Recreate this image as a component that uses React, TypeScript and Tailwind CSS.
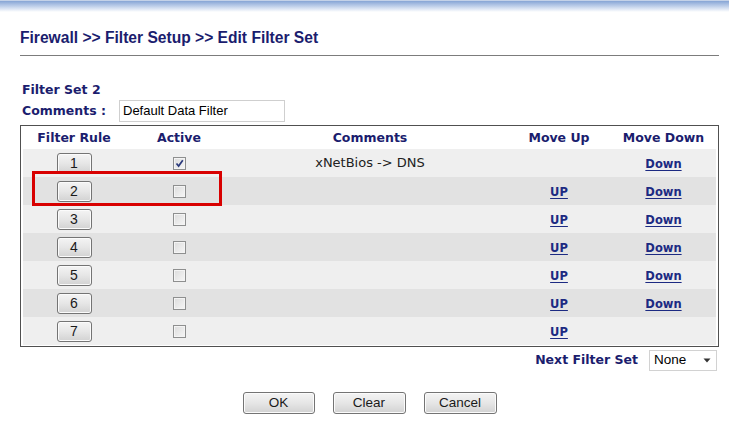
import React from "react";

// Router web UI: Firewall >> Filter Setup >> Edit Filter Set.
// Rows alternate light/dark grey; rule 2 is boxed in red as an annotation.

const NAVY = "text-[#1b1d6e]";

type Rule = { id: number; active: boolean; comment: string; up: boolean; down: boolean };

const rules: Rule[] = [
  { id: 1, active: true, comment: "xNetBios -> DNS", up: false, down: true },
  { id: 2, active: false, comment: "", up: true, down: true },
  { id: 3, active: false, comment: "", up: true, down: true },
  { id: 4, active: false, comment: "", up: true, down: true },
  { id: 5, active: false, comment: "", up: true, down: true },
  { id: 6, active: false, comment: "", up: true, down: true },
  { id: 7, active: false, comment: "", up: true, down: false },
];

const COLS = "grid grid-cols-[102px_108px_274px_104px_105px]";

export default function App() {
  return (
    <div className="h-[446px] w-[729px] overflow-hidden bg-white font-['DejaVu_Sans',sans-serif]">
      {/* Top frame shading */}
      <div className="h-px bg-[#c4d2e8]" />
      <div className="h-[11px] bg-gradient-to-b from-[#87a5d5] to-white" />

      <div className="w-[719px] pl-[20px] pt-[17px]">
        <h1
          className={`h-[18px] font-['Liberation_Sans',Arial,sans-serif] text-[15.6px] font-bold leading-[18px] ${NAVY}`}
        >
          Firewall &gt;&gt; Filter Setup &gt;&gt; Edit Filter Set
        </h1>
        <div className="mt-[8px] h-px bg-[#7c7c7c]" />

        <div className={`mt-[26px] h-[16px] pl-[2px] text-[12.5px] font-bold leading-[16px] ${NAVY}`}>
          Filter Set 2
        </div>
        <div className="mt-[2px] flex h-[22px] items-center pl-[2px]">
          <span className={`w-[97px] text-[12.5px] font-bold ${NAVY}`}>Comments :</span>
          <div className="flex h-[22px] w-[166px] items-center border border-[#cfcfcf] pl-[3px] font-['Liberation_Sans',Arial,sans-serif] text-[13px] text-black">
            Default Data Filter
          </div>
        </div>

        {/* Rule table */}
        <div className="relative mt-[3px] border border-[#505050] px-[2px] pb-[1px] pt-[2px]">
          <div className={`${COLS} h-[21px] items-center text-center text-[12.5px] font-bold ${NAVY}`}>
            <span>Filter Rule</span>
            <span>Active</span>
            <span>Comments</span>
            <span>Move Up</span>
            <span>Move Down</span>
          </div>
          {rules.map((r) => (
            <div
              key={r.id}
              className={`${COLS} h-[28px] items-center text-center ${
                r.id % 2 === 1 ? "bg-[#efefef]" : "bg-[#e2e2e2]"
              }`}
            >
              <div className="flex justify-center">
                <WinButton className="h-[21px] w-[35px] text-[14px]">{r.id}</WinButton>
              </div>
              <div className="flex justify-center">
                <Checkbox checked={r.active} />
              </div>
              <span className="text-[13px] text-[#222]">{r.comment}</span>
              <span>{r.up && <LinkText>UP</LinkText>}</span>
              <span>{r.down && <LinkText>Down</LinkText>}</span>
            </div>
          ))}
          <div className="pointer-events-none absolute left-[11px] top-[45px] h-[35px] w-[190px] border-[3px] border-[#d80000]" />
        </div>

        <div className="mt-[3px] flex h-[21px] items-center justify-end pr-[2px]">
          <span className={`mr-[11px] text-[12.5px] font-bold ${NAVY}`}>Next Filter Set</span>
          <div className="flex h-[21px] w-[68px] items-center justify-between border border-[#d2d2d2] pl-[4px] pr-[5px] font-['Liberation_Sans',Arial,sans-serif] text-[13.5px] text-black">
            <span>None</span>
            <svg width="8" height="5" viewBox="0 0 8 5" aria-hidden="true">
              <path d="M0.5 0.5h7L4 4.5z" fill="#333" />
            </svg>
          </div>
        </div>

        <div className="mt-[21px] flex justify-center gap-[18px]">
          <WinButton className="h-[22px] w-[72px] text-[13.5px]">OK</WinButton>
          <WinButton className="h-[22px] w-[73px] text-[13.5px]">Clear</WinButton>
          <WinButton className="h-[22px] w-[73px] text-[13.5px]">Cancel</WinButton>
        </div>
      </div>
    </div>
  );
}

function WinButton({ className, children }: { className: string; children: React.ReactNode }) {
  return (
    <button
      type="button"
      className={`flex items-center justify-center rounded-[3px] border border-[#747474] bg-gradient-to-b from-[#f4f4f4] via-[#e6e6e6] to-[#d2d2d2] font-['Liberation_Sans',Arial,sans-serif] leading-none text-[#1a1a1a] shadow-[inset_0_0_0_1px_#fbfbfb] ${className}`}
    >
      {children}
    </button>
  );
}

function Checkbox({ checked }: { checked: boolean }) {
  return (
    <span className="flex h-[13px] w-[13px] items-center justify-center border border-[#8e8f8f] bg-gradient-to-br from-[#dcdcdc] to-[#f6f6f6] shadow-[inset_0_0_0_1px_#f4f4f4]">
      {checked && (
        <svg width="11" height="11" viewBox="0 0 11 11" aria-hidden="true">
          <path d="M2.5 5.5 L4.6 8 L8.8 2.2" fill="none" stroke="#2b3a7c" strokeWidth="1.7" />
        </svg>
      )}
    </span>
  );
}

function LinkText({ children }: { children: React.ReactNode }) {
  return (
    <a href="#" className="text-[11.5px] font-bold text-[#1c2a82] underline underline-offset-2">
      {children}
    </a>
  );
}
